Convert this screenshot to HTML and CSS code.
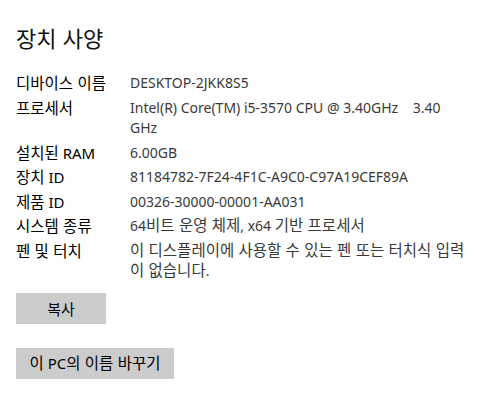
FILE: index.html
```html
<!DOCTYPE html>
<html lang="ko">
<head>
<meta charset="utf-8">
<link rel="stylesheet" href="styles.css">
</head>
<body>
<div class="page">
  <h1 class="title">장치 사양</h1>
  <div class="specs">
    <div class="row"><div class="label"><span class="ko">디바이스 이름</span></div><div class="value">DESKTOP-2JKK8S5</div></div>
    <div class="row"><div class="label"><span class="ko">프로세서</span></div><div class="value">Intel(R) Core(TM) i5-3570 CPU @ 3.40GHz&nbsp;&nbsp;&nbsp;&nbsp;3.40 GHz</div></div>
    <div class="row"><div class="label"><span class="ko">설치된</span> RAM</div><div class="value">6.00GB</div></div>
    <div class="row"><div class="label"><span class="ko">장치</span> ID</div><div class="value">81184782-7F24-4F1C-A9C0-C97A19CEF89A</div></div>
    <div class="row"><div class="label"><span class="ko">제품</span> ID</div><div class="value">00326-30000-00001-AA031</div></div>
    <div class="row"><div class="label"><span class="ko">시스템 종류</span></div><div class="value">64<span class="ko">비트 운영 체제</span>, x64 <span class="ko">기반 프로세서</span></div></div>
    <div class="row"><div class="label"><span class="ko">펜 및 터치</span></div><div class="value"><span class="ko">이 디스플레이에 사용할 수 있는 펜 또는 터치식 입력이 없습니다</span>.</div></div>
  </div>
  <div class="actions">
    <button class="btn btn-copy">복사</button>
    <button class="btn btn-rename"><span class="ko">이</span> PC<span class="ko">의 이름 바꾸기</span></button>
  </div>
</div>
</body>
</html>
```
FILE: styles.css
```css
html, body {
  margin: 0;
  padding: 0;
  background: #ffffff;
}
body {
  font-family: "Noto Sans", "Noto Sans CJK KR", sans-serif;
  font-size: 14px;
  color: #000;
}
.page {
  padding: 23px 16px 0 16px;
}
.ko {
  font-family: "Noto Sans CJK KR", sans-serif;
  font-size: 15.5px;
  line-height: 0;
}
.title {
  margin: 0;
  font-family: "Noto Sans CJK KR", sans-serif;
  font-size: 22px;
  font-weight: 400;
  line-height: 28px;
  color: #111;
}
.specs {
  margin-top: 22px;
  display: flex;
  flex-direction: column;
  gap: 4px;
}
.row {
  display: flex;
  line-height: 20.5px;
}
.label {
  width: 114px;
  flex: none;
  color: #000;
  font-size: 15px;
}
.value {
  width: 336px;
  color: #3a3a3a;
}
.actions {
  margin-top: 11px;
  display: flex;
  flex-direction: column;
  align-items: flex-start;
  gap: 24px;
}
.btn {
  border: none;
  background: #cccccc;
  font-family: "Noto Sans CJK KR", sans-serif;
  font-size: 15px;
  color: #000;
  height: 31px;
  padding: 0;
  margin: 0;
  line-height: 31px;
}
.btn-rename {
  font-family: "Noto Sans", "Noto Sans CJK KR", sans-serif;
  font-size: 15px;
  width: 158px;
}
.btn-copy { width: 90px; }
```
